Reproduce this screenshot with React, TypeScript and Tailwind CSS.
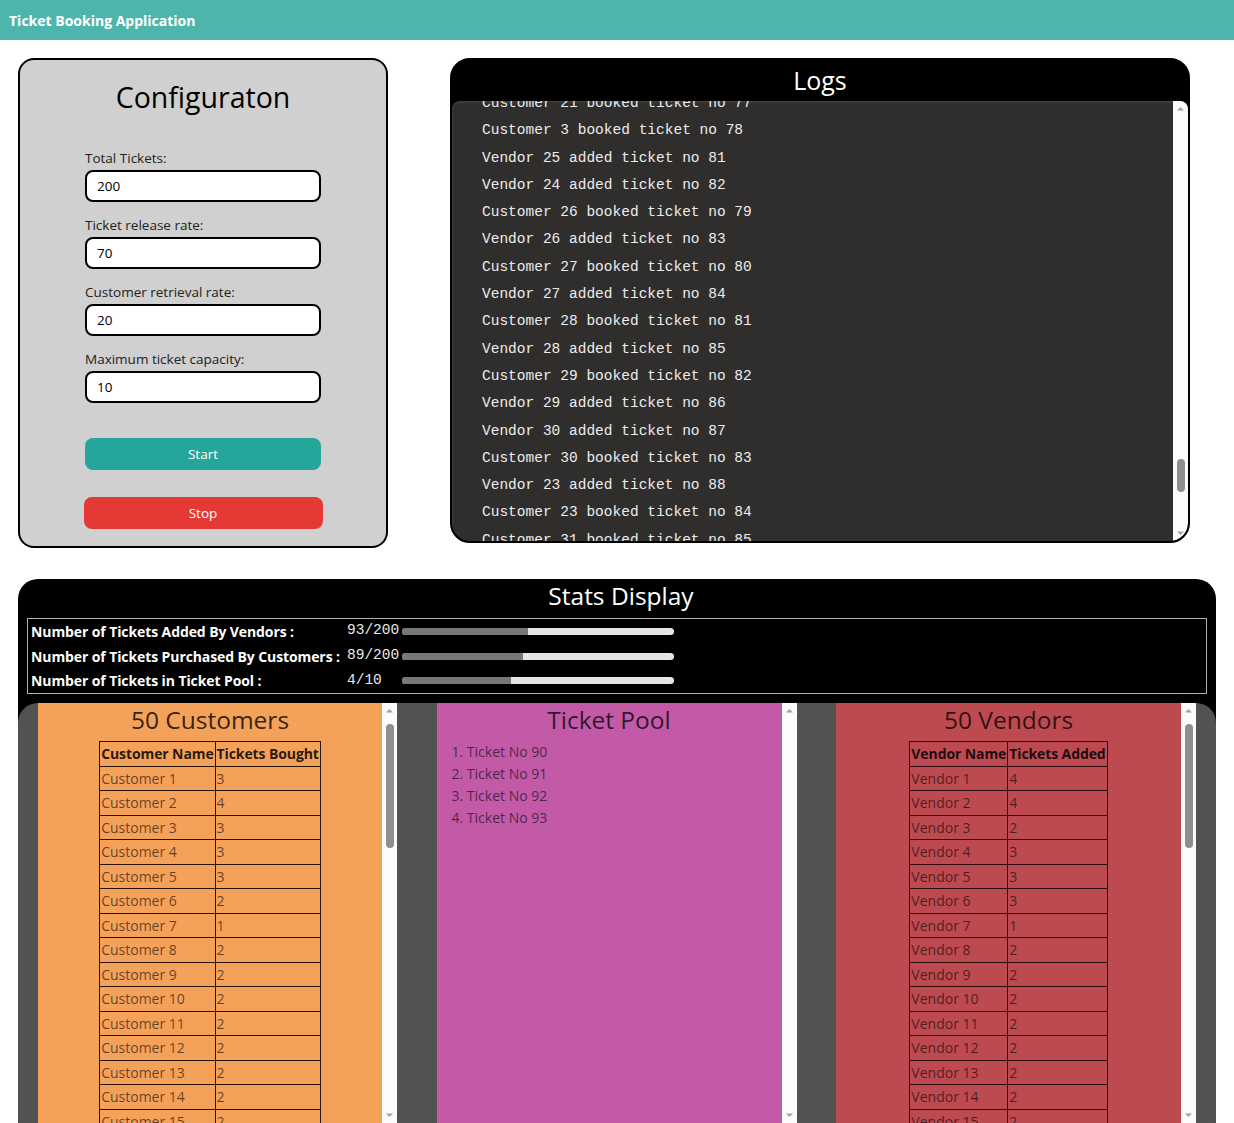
import React from "react";

const UI = { fontFamily: '"Open Sans", "Noto Sans", sans-serif' };
const MONO = { fontFamily: '"Liberation Mono", "DejaVu Sans Mono", monospace' };

const logs = [
  "Customer 21 booked ticket no 77",
  "Customer 3 booked ticket no 78",
  "Vendor 25 added ticket no 81",
  "Vendor 24 added ticket no 82",
  "Customer 26 booked ticket no 79",
  "Vendor 26 added ticket no 83",
  "Customer 27 booked ticket no 80",
  "Vendor 27 added ticket no 84",
  "Customer 28 booked ticket no 81",
  "Vendor 28 added ticket no 85",
  "Customer 29 booked ticket no 82",
  "Vendor 29 added ticket no 86",
  "Vendor 30 added ticket no 87",
  "Customer 30 booked ticket no 83",
  "Vendor 23 added ticket no 88",
  "Customer 23 booked ticket no 84",
  "Customer 31 booked ticket no 85",
];

const customers = [3, 4, 3, 3, 3, 2, 1, 2, 2, 2, 2, 2, 2, 2, 2, 2];
const vendors = [4, 4, 2, 3, 3, 3, 1, 2, 2, 2, 2, 2, 2, 2, 2, 2];

function Arrow({ up }: { up: boolean }) {
  return (
    <svg width="15" height="15" viewBox="0 0 15 15" className="shrink-0">
      {up ? (
        <path d="M4 9.5 L7.5 6 L11 9.5 Z" fill="#a3a3a3" />
      ) : (
        <path d="M4 5.5 L7.5 9 L11 5.5 Z" fill="#a3a3a3" />
      )}
    </svg>
  );
}

function Scrollbar({ thumbTop, thumbHeight }: { thumbTop?: number; thumbHeight?: number }) {
  return (
    <div className="w-[15px] shrink-0 bg-[#fbfbfb] flex flex-col items-center">
      <Arrow up />
      <div className="flex-1 w-full flex flex-col items-center">
        {thumbHeight ? (
          <div
            className="w-[8px] rounded-full bg-[#8e8e8e]"
            style={{ marginTop: thumbTop, height: thumbHeight }}
          />
        ) : null}
      </div>
      <Arrow up={false} />
    </div>
  );
}

function Field({ label, value }: { label: string; value: string }) {
  return (
    <div className="flex flex-col">
      <label className="text-[13.5px] leading-[20px] text-[#222]">{label}</label>
      <div className="mt-[2px] h-[32px] w-[236px] rounded-[8px] border-2 border-black bg-white flex items-center px-[10px] text-[13.5px] text-black">
        {value}
      </div>
    </div>
  );
}

function StatRow({ label, value, frac }: { label: string; value: string; frac: number }) {
  return (
    <div className="h-[25px] flex items-center">
      <div className="w-[319px] pl-[3px] text-[14px] font-bold text-white tracking-[-0.1px]">{label}</div>
      <div className="w-[55px] text-[14.5px] text-[#e8e8e8]" style={MONO}>
        {value}
      </div>
      <div className="w-[272px] h-[7px] rounded-full bg-[#e6e6e6] overflow-hidden flex">
        <div className="h-full bg-[#777777]" style={{ width: `${frac * 100}%` }} />
      </div>
    </div>
  );
}

function PeopleTable({
  nameHead,
  countHead,
  prefix,
  data,
  border,
}: {
  nameHead: string;
  countHead: string;
  prefix: string;
  data: number[];
  border: string;
}) {
  return (
    <table className={`border-collapse text-[14px] ${border}`}>
      <thead>
        <tr className="h-[24.5px]">
          <th className={`border ${border} text-left font-bold px-[1px] text-black/85 tracking-[-0.1px]`}>{nameHead}</th>
          <th className={`border ${border} text-left font-bold px-[1px] text-black/85 tracking-[-0.1px]`}>{countHead}</th>
        </tr>
      </thead>
      <tbody>
        {data.map((n, i) => (
          <tr key={i} className="h-[24.5px]">
            <td className={`border ${border} px-[1px] text-black/60`}>
              {prefix} {i + 1}
            </td>
            <td className={`border ${border} px-[1px] text-black/60`}>{n}</td>
          </tr>
        ))}
      </tbody>
    </table>
  );
}

export default function App() {
  return (
    <div className="w-[1234px] h-[1123px] overflow-hidden bg-white" style={UI}>
      <header className="h-[40px] bg-[#4db6ac] flex items-center pl-[9px]">
        <span className="text-white font-bold text-[14px]">Ticket Booking Application</span>
      </header>

      <div className="flex pl-[18px] pt-[18px] gap-[62px] items-start">
        {/* Configuration */}
        <div className="w-[370px] h-[490px] bg-[#d0d0d0] border-2 border-black rounded-[16px] flex flex-col items-center pt-[18px]">
          <h1 className="text-[28.5px] leading-[38px] text-black font-normal">Configuraton</h1>
          <div className="mt-[32px] flex flex-col gap-[13px]">
            <Field label="Total Tickets:" value="200" />
            <Field label="Ticket release rate:" value="70" />
            <Field label="Customer retrieval rate:" value="20" />
            <Field label="Maximum ticket capacity:" value="10" />
          </div>
          <button className="mt-[35px] w-[236px] h-[32px] rounded-[8px] bg-[#26a69a] text-white text-[13.5px]">
            Start
          </button>
          <button className="mt-[27px] w-[239px] h-[32px] rounded-[8px] bg-[#e53935] text-white text-[13.5px]">
            Stop
          </button>
        </div>

        {/* Logs */}
        <div className="w-[740px] h-[485px] bg-black rounded-[20px] flex flex-col overflow-hidden border-2 border-black">
          <div className="h-[41px] shrink-0 flex items-center justify-center">
            <h2 className="text-white text-[25px] leading-[34px] font-normal -mt-[2px]">Logs</h2>
          </div>
          <div className="flex-1 flex bg-[#302e2c] rounded-t-[8px] rounded-b-[18px] overflow-hidden shadow-[inset_0_1px_3px_rgba(255,255,255,0.12)]">
            <div className="flex-1 overflow-hidden pl-[30px]">
              <div className="-mt-[11px]">
                {logs.map((l, i) => (
                  <div
                    key={i}
                    className="h-[27.3px] leading-[27.3px] text-[14.5px] text-[#ececec] whitespace-pre"
                    style={MONO}
                  >
                    {l}
                  </div>
                ))}
              </div>
            </div>
            <Scrollbar thumbTop={343} thumbHeight={33} />
          </div>
        </div>
      </div>

      {/* Stats Display */}
      <div className="ml-[18px] mt-[31px] w-[1198px] h-[560px] bg-black rounded-[20px] overflow-hidden flex flex-col">
        <div className="h-[39px] shrink-0 flex justify-center pl-[8px]">
          <h2 className="text-white text-[24.5px] leading-[34px] font-normal">Stats Display</h2>
        </div>
        <div className="mx-[9px] border border-[#b0b0b0] h-[76px] flex flex-col justify-center">
          <StatRow label="Number of Tickets Added By Vendors :" value="93/200" frac={93 / 200} />
          <StatRow label="Number of Tickets Purchased By Customers :" value="89/200" frac={89 / 200} />
          <StatRow label="Number of Tickets in Ticket Pool :" value="4/10" frac={4 / 10} />
        </div>
        <div className="mt-[9px] flex-1 bg-[#525252] rounded-[20px] flex justify-between px-[20px] overflow-hidden">
          {/* Customers */}
          <div className="w-[359px] flex h-[420px]">
            <div className="flex-1 bg-[#f4a15a] flex flex-col items-center overflow-hidden">
              <h3 className="text-[24.5px] leading-[34px] text-black/80 font-normal">50 Customers</h3>
              <div className="mt-[4px]">
                <PeopleTable
                  nameHead="Customer Name"
                  countHead="Tickets Bought"
                  prefix="Customer"
                  data={customers}
                  border="border-[#2a1406]"
                />
              </div>
            </div>
            <Scrollbar thumbTop={6} thumbHeight={124} />
          </div>

          {/* Ticket Pool */}
          <div className="w-[360px] flex h-[420px]">
            <div className="flex-1 bg-[#c25aa8] flex flex-col overflow-hidden">
              <h3 className="text-[24.5px] leading-[34px] text-black/75 font-normal text-center">Ticket Pool</h3>
              <ol className="mt-[4px] pl-[15px] text-[14px] text-black/60">
                {[90, 91, 92, 93].map((n, i) => (
                  <li key={n} className="h-[22px] leading-[22px]">
                    {i + 1}. Ticket No {n}
                  </li>
                ))}
              </ol>
            </div>
            <Scrollbar />
          </div>

          {/* Vendors */}
          <div className="w-[360px] flex h-[420px]">
            <div className="flex-1 bg-[#bc4a50] flex flex-col items-center overflow-hidden">
              <h3 className="text-[24.5px] leading-[34px] text-black/75 font-normal">50 Vendors</h3>
              <div className="mt-[4px]">
                <PeopleTable
                  nameHead="Vendor Name"
                  countHead="Tickets Added"
                  prefix="Vendor"
                  data={vendors}
                  border="border-[#2a0a0c]"
                />
              </div>
            </div>
            <Scrollbar thumbTop={6} thumbHeight={124} />
          </div>
        </div>
      </div>
    </div>
  );
}
